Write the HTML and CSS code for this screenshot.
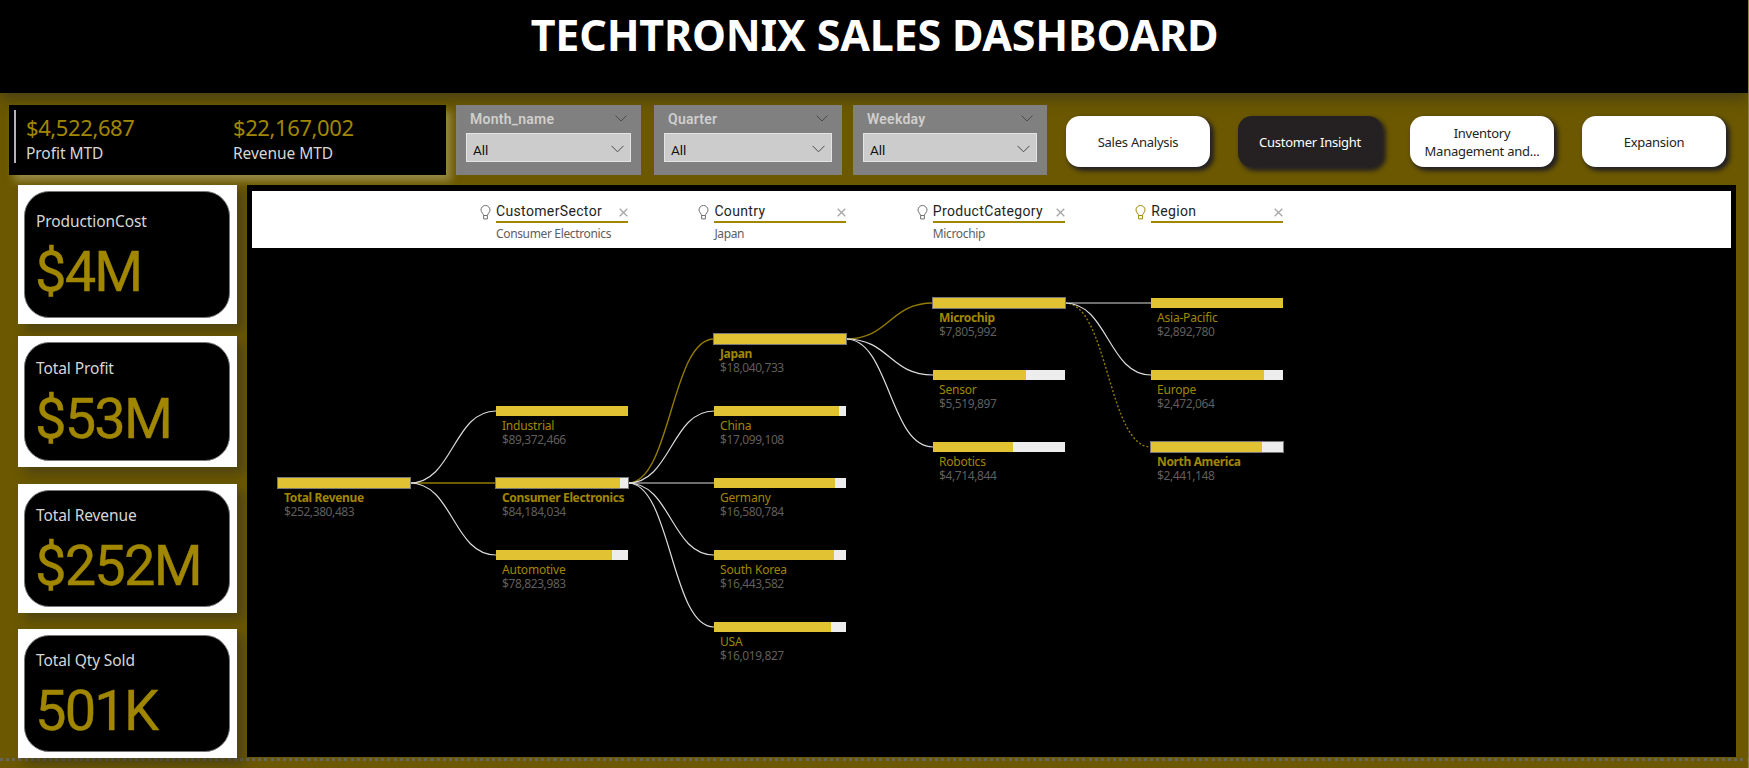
FILE: index.html
```html
<!DOCTYPE html>
<html lang="en">
<head>
  <meta charset="UTF-8">
  <title>Techtronix Sales Dashboard</title>
  <link rel="stylesheet" href="styles.css">
</head>
<body>

  <header class="title-bar">
    <h1>TECHTRONIX SALES DASHBOARD</h1>
  </header>

  <div class="top-row">
    <div class="mtd-card">
      <div class="mtd">
        <div class="mtd-value">$4,522,687</div>
        <div class="mtd-label">Profit MTD</div>
      </div>
      <div class="mtd">
        <div class="mtd-value">$22,167,002</div>
        <div class="mtd-label">Revenue MTD</div>
      </div>
    </div>

    <div class="slicer month">
      <div class="slicer-head">Month_name
        <svg class="chev" width="12" height="7" viewBox="0 0 12 7"><path d="M.5 .5 6 6 11.5 .5"/></svg>
      </div>
      <div class="select">All
        <svg class="chev" width="13" height="8" viewBox="0 0 13 8"><path d="M.5 .8 6.5 6.8 12.5 .8"/></svg>
      </div>
    </div>
    <div class="slicer quarter">
      <div class="slicer-head">Quarter
        <svg class="chev" width="12" height="7" viewBox="0 0 12 7"><path d="M.5 .5 6 6 11.5 .5"/></svg>
      </div>
      <div class="select">All
        <svg class="chev" width="13" height="8" viewBox="0 0 13 8"><path d="M.5 .8 6.5 6.8 12.5 .8"/></svg>
      </div>
    </div>
    <div class="slicer weekday">
      <div class="slicer-head">Weekday
        <svg class="chev" width="12" height="7" viewBox="0 0 12 7"><path d="M.5 .5 6 6 11.5 .5"/></svg>
      </div>
      <div class="select">All
        <svg class="chev" width="13" height="8" viewBox="0 0 13 8"><path d="M.5 .8 6.5 6.8 12.5 .8"/></svg>
      </div>
    </div>

    <nav class="pages">
      <button>Sales Analysis</button>
      <button class="active">Customer Insight</button>
      <button>Inventory<br>Management and...</button>
      <button>Expansion</button>
    </nav>
  </div>

  <div class="content">
    <div class="cards">
      <div class="card cost">
        <div class="card-inner">
          <div class="card-label">ProductionCost</div>
          <div class="card-value">$4M</div>
        </div>
      </div>
      <div class="card profit">
        <div class="card-inner">
          <div class="card-label">Total Profit</div>
          <div class="card-value">$53M</div>
        </div>
      </div>
      <div class="card revenue">
        <div class="card-inner">
          <div class="card-label">Total Revenue</div>
          <div class="card-value">$252M</div>
        </div>
      </div>
      <div class="card qty">
        <div class="card-inner">
          <div class="card-label">Total Qty Sold</div>
          <div class="card-value">501K</div>
        </div>
      </div>
    </div>

    <div class="panel">
      <div class="levels" id="levels"></div>
      <div class="tree" id="tree">
        <svg class="links" id="links" width="1479" height="509"></svg>
      </div>
    </div>
  </div>

  <div class="dots"></div>

  <script>
    const levels = [
      { name: "CustomerSector", value: "Consumer Electronics" },
      { name: "Country", value: "Japan" },
      { name: "ProductCategory", value: "Microchip" },
      { name: "Region", value: "", gold: true }
    ];

    // col = level in the tree, y = middle of the bar
    const nodes = [
      { id: "total", col: 0, y: 235, name: "Total Revenue", value: 252380483, fill: 1, selected: true },
      { parent: "total", id: "ind", col: 1, y: 163, name: "Industrial", value: 89372466, fill: 1 },
      { parent: "total", id: "con", col: 1, y: 235, name: "Consumer Electronics", value: 84184034, fill: 0.942, selected: true },
      { parent: "total", id: "aut", col: 1, y: 307, name: "Automotive", value: 78823983, fill: 0.882 },
      { parent: "con", id: "jp", col: 2, y: 91, name: "Japan", value: 18040733, fill: 1, selected: true },
      { parent: "con", id: "cn", col: 2, y: 163, name: "China", value: 17099108, fill: 0.948 },
      { parent: "con", id: "de", col: 2, y: 235, name: "Germany", value: 16580784, fill: 0.919 },
      { parent: "con", id: "kr", col: 2, y: 307, name: "South Korea", value: 16443582, fill: 0.911 },
      { parent: "con", id: "us", col: 2, y: 379, name: "USA", value: 16019827, fill: 0.888 },
      { parent: "jp", id: "mic", col: 3, y: 55, name: "Microchip", value: 7805992, fill: 1, selected: true },
      { parent: "jp", id: "sen", col: 3, y: 127, name: "Sensor", value: 5519897, fill: 0.707 },
      { parent: "jp", id: "rob", col: 3, y: 199, name: "Robotics", value: 4714844, fill: 0.604 },
      { parent: "mic", id: "ap", col: 4, y: 55, name: "Asia-Pacific", value: 2892780, fill: 1 },
      { parent: "mic", id: "eu", col: 4, y: 127, name: "Europe", value: 2472064, fill: 0.855 },
      { parent: "mic", id: "na", col: 4, y: 199, name: "North America", value: 2441148, fill: 0.844, selected: true, dotted: true }
    ];

    const startX = 25.7;
    const colStep = 218.3;
    const barWidth = 132;

    function nodeX(node) {
      return Math.round(startX + node.col * colStep);
    }

    function drawLevels() {
      document.getElementById("levels").innerHTML = levels.map(l => `
        <div class="level">
          <svg class="bulb ${l.gold ? "gold" : ""}" width="11" height="15" viewBox="0 0 11 15">
            <path d="M3.6 10.5C3.6 8.6 1 7.6 1 4.9a4.5 4.4 0 0 1 9 0C10 7.6 7.4 8.6 7.4 10.5zM3.6 10.5v3.4h3.8v-3.4"/>
          </svg>
          <div class="level-body">
            <div class="level-head"><span>${l.name}</span>
              <svg class="close" width="9" height="9" viewBox="0 0 9 9"><path d="M.7 .7l7.6 7.6M8.3 .7L.7 8.3"/></svg>
            </div>
            <div class="level-value">${l.value}</div>
          </div>
        </div>`).join("");
    }

    function drawTree() {
      let links = "";
      let html = "";

      // selected paths go first so the white ones sit on top at the split
      const order = nodes.filter(n => n.parent).sort((a, b) => (b.selected ? 1 : 0) - (a.selected ? 1 : 0));
      order.forEach(n => {
        const p = nodes.find(m => m.id === n.parent);
        const x1 = nodeX(p) + barWidth;
        const x2 = nodeX(n);
        const mid = (x1 + x2) / 2;
        let cls = "link";
        if (n.selected) cls += " selected";
        if (n.dotted) cls += " dotted";
        if (p.y === n.y) cls += " straight";
        links += `<path class="${cls}" d="M${x1} ${p.y}C${mid} ${p.y} ${mid} ${n.y} ${x2} ${n.y}"/>`;
      });

      nodes.forEach(n => {
        html += `
          <div class="node ${n.selected ? "selected" : ""}" style="left:${nodeX(n)}px;top:${n.y - 5}px">
            <div class="bar"><div class="fill" style="width:${n.fill * 100}%"></div></div>
            <div class="node-name">${n.name}</div>
            <div class="node-value">$${n.value.toLocaleString("en-US")}</div>
          </div>`;
      });

      document.getElementById("links").innerHTML = links;
      document.getElementById("tree").insertAdjacentHTML("beforeend", html);
    }

    drawLevels();
    drawTree();
  </script>

</body>
</html>
```

FILE: styles.css
```css
* {
  box-sizing: border-box;
}

body {
  margin: 0;
  height: 768px;
  overflow: hidden;
  display: flex;
  flex-direction: column;
  background-color: #6b5800;
  border-right: 1px solid #8f8451;
  font-family: "Noto Sans", sans-serif;
}

.title-bar {
  height: 93px;
  flex-shrink: 0;
  background-color: #000;
  box-shadow: 0 5px 14px rgba(60, 55, 30, 0.8);
  text-align: center;
  margin-right: -1px;
}

h1 {
  margin: 0;
  padding-top: 5px;
  font-size: 43px;
  line-height: 59px;
  color: #fff;
  letter-spacing: -0.2px;
}

.top-row {
  display: flex;
  height: 92px;
  flex-shrink: 0;
  padding: 12px 0 0 9px;
}

.mtd-card {
  position: relative;
  width: 437px;
  height: 70px;
  margin-right: 10px;
  padding: 5px 5px 0;
  display: flex;
  background-color: #000;
  box-shadow: 5px 6px 8px rgba(190, 180, 130, 0.55);
}

.mtd {
  width: 207px;
  height: 53px;
  padding-left: 10px;
}

.mtd:first-child {
  border-left: 2px solid #b3b3b3;
}

.mtd:last-child {
  padding-left: 12px;
}

.mtd-value {
  font-size: 22px;
  line-height: 26px;
  padding-top: 4px;
  color: #a18700;
  letter-spacing: -0.4px;
}

.mtd-label {
  padding-top: 3px;
  font-size: 15.5px;
  line-height: 20px;
  color: #d6d6d6;
  letter-spacing: -0.05px;
}

.slicer {
  height: 70px;
  padding: 4px 10px 0;
  background-color: #808080;
  font-family: Roboto, sans-serif;
}

.month {
  width: 185px;
  margin-right: 13px;
}

.quarter {
  width: 188px;
  margin-right: 11px;
}

.weekday {
  width: 194px;
  margin-right: 19px;
}

.slicer-head {
  display: flex;
  justify-content: space-between;
  height: 24px;
  padding: 1px 4px 0;
  font-size: 14px;
  line-height: 18px;
  font-weight: 600;
  letter-spacing: 0.25px;
  color: #cfcfcf;
}

.chev {
  margin-top: 5px;
  fill: none;
  stroke: #4a4a4a;
  stroke-width: 1;
}

.select {
  display: flex;
  justify-content: space-between;
  height: 29px;
  padding: 6px 6px 0;
  background-color: #ccc;
  border: 1px solid #e4e4e4;
  font-size: 13.5px;
  line-height: 20px;
  color: #111;
}

.pages {
  display: flex;
  gap: 28px;
  padding-top: 11px;
}

button {
  width: 144px;
  height: 51px;
  padding: 0;
  border: none;
  border-radius: 14px;
  background-color: #fff;
  color: #252423;
  font-family: "Noto Sans", sans-serif;
  font-size: 13px;
  line-height: 18px;
  letter-spacing: -0.25px;
  box-shadow: 3px 3px 4px 1px #252122;
}

button.active {
  background-color: #252122;
  color: #fff;
}

.content {
  display: flex;
  height: 572px;
  flex-shrink: 0;
  padding-left: 18px;
}

.cards {
  width: 219px;
  margin-right: 10px;
}

.card {
  position: relative;
  padding: 6px 7px 6px 6px;
  background-color: #fff;
  box-shadow: 7px 7px 10px rgba(60, 55, 30, 0.6);
}

.cost {
  height: 139px;
  margin-bottom: 12px;
}

.profit {
  height: 131px;
  margin-bottom: 17px;
}

.revenue {
  height: 129px;
  margin-bottom: 16px;
}

.qty {
  height: 129px;
}

.card-inner {
  height: 100%;
  padding: 5px 11px 0;
  display: flex;
  flex-direction: column;
  justify-content: center;
  background-color: #000;
  border: 1px solid #777;
  border-radius: 25px;
}

.card-label {
  font-size: 15.5px;
  line-height: 22px;
  color: #d6d6d6;
  letter-spacing: -0.1px;
}

.card-value {
  font-family: Roboto, sans-serif;
  font-size: 56px;
  font-weight: 400;
  line-height: 66px;
  margin-top: 7px;
  margin-left: -1px;
  color: #a18700;
  -webkit-text-stroke: 0.4px #a18700;
  letter-spacing: -1.8px;
}

.panel {
  position: relative;
  width: 1489px;
  height: 572px;
  padding: 6px 5px 0;
  background-color: #000;
}

.levels {
  display: flex;
  height: 57px;
  padding-left: 228px;
  background-color: #fff;
}

.level {
  display: flex;
  width: 218.4px;
  padding-top: 13px;
}

.level-body {
  width: 132px;
  margin-left: 5px;
}

.bulb {
  margin-top: 1px;
  fill: none;
  stroke: #6f6f6f;
  stroke-width: 1;
}

.bulb.gold {
  stroke: #a18700;
}

.level-head {
  display: flex;
  justify-content: space-between;
  height: 19px;
  border-bottom: 2px solid #a18700;
  font-family: Roboto, sans-serif;
  font-size: 14px;
  line-height: 15px;
  letter-spacing: 0.35px;
  color: #252423;
}

.close {
  margin-top: 4px;
  stroke: #a6a6a6;
  stroke-width: 1.3;
}

.level-value {
  padding-top: 3px;
  font-size: 12px;
  line-height: 16px;
  letter-spacing: -0.35px;
  color: #605e5c;
}

.tree {
  position: relative;
  height: 509px;
}

.links {
  display: block;
}

.link {
  fill: none;
  stroke: #dcdcdc;
  stroke-width: 1.2;
}

.link.selected {
  stroke: #937b00;
  stroke-width: 1.4;
}

.link.dotted {
  stroke-dasharray: 2 2;
}

.node {
  position: absolute;
  width: 140px;
  white-space: nowrap;
  font-size: 12px;
  line-height: 14px;
}

.bar {
  width: 132px;
  height: 10px;
  background-color: #ededed;
}

.node.selected .bar {
  outline: 1px solid #777;
}

.fill {
  height: 10px;
  background-color: #e1c233;
}

.node-name {
  padding: 3px 0 0 6px;
  color: #a18700;
  letter-spacing: -0.2px;
}

.node.selected .node-name {
  font-weight: bold;
  letter-spacing: -0.35px;
}

.node-value {
  padding-left: 6px;
  color: #605e5c;
  letter-spacing: -0.4px;
}

.dots {
  height: 3px;
  margin-top: 1px;
  flex-shrink: 0;
  background: repeating-linear-gradient(90deg, #66665f 0, #66665f 3px, transparent 3px, transparent 6.15px);
}
```
